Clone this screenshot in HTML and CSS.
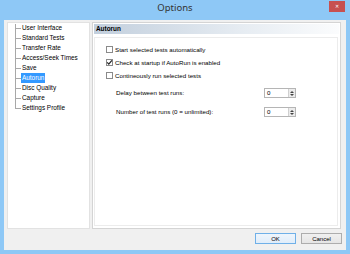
FILE: index.html
```html
<!DOCTYPE html>
<html lang="en">
<head>
    <meta charset="UTF-8">
    <meta name="viewport" content="width=device-width, initial-scale=1.0">
    <title>Options</title>
    <link rel="stylesheet" href="styles.css">
</head>
<body>
    <div class="window">
        <div class="titlebar">
            <span></span>
            <div class="title">Options</div>
            <div class="close-wrap"><button class="close-btn">✕</button></div>
        </div>

        <div class="client">
            <div class="main">
                <!-- category tree -->
                <ul class="tree">
                    <li class="tree-item"><span class="branch"></span><span class="label">User Interface</span></li>
                    <li class="tree-item"><span class="branch"></span><span class="label">Standard Tests</span></li>
                    <li class="tree-item"><span class="branch"></span><span class="label">Transfer Rate</span></li>
                    <li class="tree-item"><span class="branch"></span><span class="label">Access/Seek Times</span></li>
                    <li class="tree-item"><span class="branch"></span><span class="label">Save</span></li>
                    <li class="tree-item selected"><span class="branch"></span><span class="label">Autorun</span></li>
                    <li class="tree-item"><span class="branch"></span><span class="label">Disc Quality</span></li>
                    <li class="tree-item"><span class="branch"></span><span class="label">Capture</span></li>
                    <li class="tree-item last"><span class="branch"></span><span class="label">Settings Profile</span></li>
                </ul>

                <div class="panel">
                    <div class="panel-header">Autorun</div>
                    <div class="panel-body">
                        <label class="check-row">
                            <span class="checkbox"></span>
                            <span>Start selected tests automatically</span>
                        </label>
                        <label class="check-row">
                            <span class="checkbox">
                                <svg viewBox="0 0 7 7" width="7" height="7"><path d="M1.2 3.4 L2.8 5.1 L5.9 1.3" fill="none" stroke="#222" stroke-width="1.2"/></svg>
                            </span>
                            <span>Check at startup if AutoRun is enabled</span>
                        </label>
                        <label class="check-row">
                            <span class="checkbox"></span>
                            <span>Contineously run selected tests</span>
                        </label>

                        <div class="fields">
                            <span class="field-label">Delay between test runs:</span>
                            <div class="spin">
                                <span class="spin-value">0</span>
                                <span class="spin-arrows"><span class="up"></span><span class="down"></span></span>
                            </div>
                            <span class="field-label">Number of test runs (0 = unlimited):</span>
                            <div class="spin">
                                <span class="spin-value">0</span>
                                <span class="spin-arrows"><span class="up"></span><span class="down"></span></span>
                            </div>
                        </div>
                    </div>
                </div>
            </div>

            <div class="buttons">
                <button class="btn default">OK</button>
                <button class="btn">Cancel</button>
            </div>
        </div>
    </div>
</body>
</html>
```

FILE: styles.css
```css
* {
    margin: 0;
    padding: 0;
    box-sizing: border-box;
}

body {
    font-family: "Liberation Sans", Arial, sans-serif;
    font-size: 6.2px;
    color: #000;
    background: #8ec8f6;
    overflow: hidden;
}

.window {
    width: 350px;
    height: 254px;
    background: #8ec8f6;
    padding: 0 4px 4px;
    display: flex;
    flex-direction: column;
}

.titlebar {
    height: 20px;
    display: grid;
    grid-template-columns: 1fr auto 1fr;
}

.title {
    font-family: "Noto Sans", "Open Sans", sans-serif;
    font-size: 9.5px;
    line-height: 16px;
    color: #333;
}

.close-wrap {
    display: flex;
    justify-content: flex-end;
    padding: 1px 1px 0 0;
}

.close-btn {
    width: 16px;
    height: 11px;
    border: none;
    background: #c75050;
    color: #fff;
    font-size: 5px;
    font-weight: bold;
    line-height: 11px;
    font-family: "DejaVu Sans", sans-serif;
}

.client {
    flex: 1;
    background: #f0f0f0;
    padding: 2px 4px 6px 3px;
    display: flex;
    flex-direction: column;
}

.main {
    flex: 1;
    display: flex;
    gap: 2px;
}

/* tree */
.tree {
    list-style: none;
    width: 83px;
    background: #fff;
    border: 1px solid #e2e2e2;
    padding: 0 0 0 7px;
    font-size: 6.4px;
}

.tree-item {
    display: flex;
    align-items: center;
    height: 10px;
    white-space: nowrap;
}

.branch {
    width: 6px;
    height: 10px;
    flex: none;
    background:
        linear-gradient(#a8a8a8, #a8a8a8) left top / 1px 100% no-repeat,
        linear-gradient(#a8a8a8, #a8a8a8) left 5px / 100% 1px no-repeat;
}

.tree-item:first-child .branch {
    background:
        linear-gradient(#a8a8a8, #a8a8a8) left 1px / 1px 100% no-repeat,
        linear-gradient(#a8a8a8, #a8a8a8) left 5px / 100% 1px no-repeat;
}

.tree-item.last .branch {
    background:
        linear-gradient(#a8a8a8, #a8a8a8) left top / 1px 6px no-repeat,
        linear-gradient(#a8a8a8, #a8a8a8) left 5px / 100% 1px no-repeat;
}

.label {
    padding: 0 1px;
    line-height: 10px;
}

.tree-item.selected .label {
    background: #3399ff;
    color: #fff;
}

/* right panel */
.panel {
    width: 249px;
    margin-right: 1px;
    background: #fff;
    border: 1px solid #d4d4d4;
    padding: 1px;
    display: flex;
    flex-direction: column;
}

.panel-header {
    height: 10px;
    line-height: 10px;
    font-weight: bold;
    font-size: 6.4px;
    padding-left: 2px;
    background: linear-gradient(to right, #c2cfdd, #e6ecf2 60%, #fbfcfd);
}

.panel-body {
    flex: 1;
    margin: 3px 1px 1px 0;
    border: 1px solid #ececec;
    padding: 5px 0 0 11px;
}

.check-row {
    display: flex;
    align-items: center;
    gap: 2px;
    height: 13px;
}

.checkbox {
    width: 7px;
    height: 7px;
    border: 1px solid #8a8a8a;
    background: #fff;
    display: flex;
    align-items: center;
    justify-content: center;
}

.checkbox svg {
    flex: none;
}

.fields {
    display: grid;
    grid-template-columns: 148px 32px;
    row-gap: 9px;
    align-items: center;
    margin: 6px 0 0 10px;
}

.field-label {
    line-height: 10px;
}

.spin {
    height: 10px;
    border: 1px solid #b5b5b5;
    background: #fff;
    display: flex;
}

.spin-value {
    flex: 1;
    line-height: 8px;
    padding-left: 2px;
}

.spin-arrows {
    width: 7px;
    background: #ececec;
    border-left: 1px solid #d0d0d0;
    display: flex;
    flex-direction: column;
    align-items: center;
    justify-content: center;
    gap: 1px;
}

.spin-arrows .up {
    width: 0;
    height: 0;
    border-left: 2px solid transparent;
    border-right: 2px solid transparent;
    border-bottom: 2px solid #444;
}

.spin-arrows .down {
    width: 0;
    height: 0;
    border-left: 2px solid transparent;
    border-right: 2px solid transparent;
    border-top: 2px solid #444;
}

/* dialog buttons */
.buttons {
    display: flex;
    justify-content: flex-end;
    gap: 5px;
    margin-top: 4px;
}

.btn {
    width: 41px;
    height: 11px;
    font-family: "Liberation Sans", Arial, sans-serif;
    font-size: 6px;
    color: #000;
    background: linear-gradient(#f0f0f0, #e5e5e5);
    border: 1px solid #adadad;
}

.btn.default {
    border-color: #6fb0e8;
    background: linear-gradient(#eef5fc, #e0edfa);
}
```
